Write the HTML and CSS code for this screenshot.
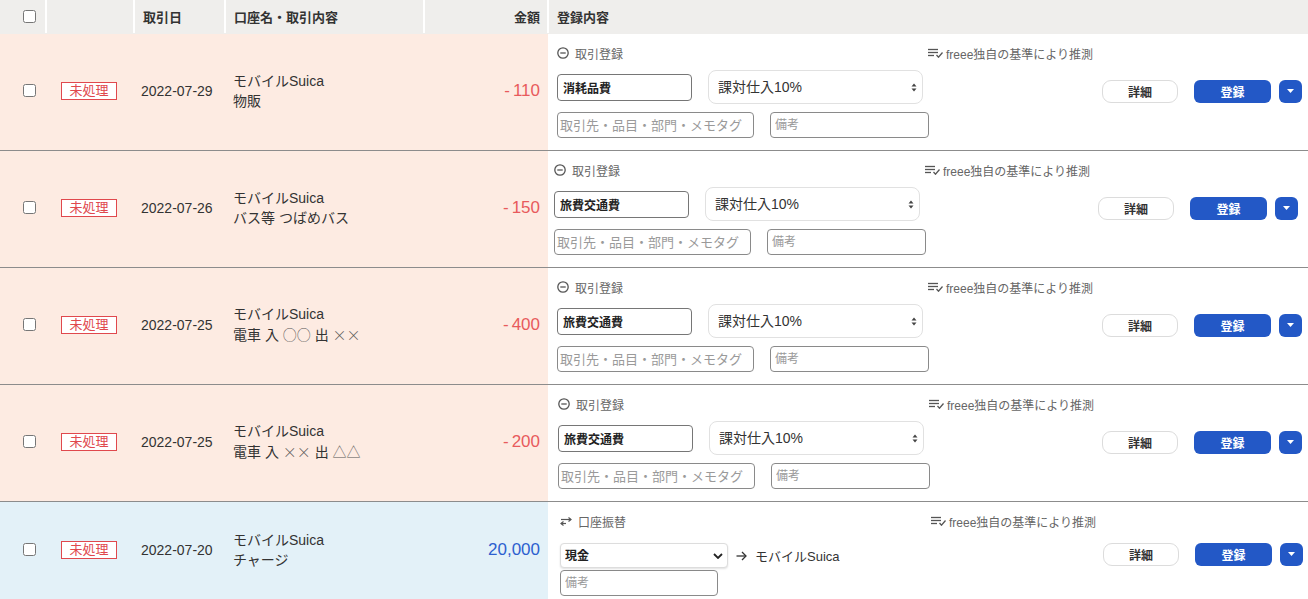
FILE: index.html
```html
<!DOCTYPE html>
<html lang="ja">
<head>
<meta charset="utf-8">
<title>取引一覧</title>
<link rel="stylesheet" href="styles.css">
</head>
<body>
<div class="table">
  <div class="thead">
    <div class="th th-check"><input type="checkbox" class="chk"></div>
    <div class="th"></div>
    <div class="th">取引日</div>
    <div class="th">口座名・取引内容</div>
    <div class="th th-amount">金額</div>
    <div class="th">登録内容</div>
  </div>

  <!-- row 1 -->
  <div class="row row-out">
    <div class="cell cell-check"><input type="checkbox" class="chk"></div>
    <div class="cell cell-status"><span class="badge">未処理</span></div>
    <div class="cell cell-date">2022-07-29</div>
    <div class="cell cell-desc"><div>モバイルSuica</div><div>物販</div></div>
    <div class="cell cell-amount"><span class="amt amt-out"><span class="minus">-</span>110</span></div>
    <div class="cell reg">
      <div class="reg-main">
        <div class="reg-head">
          <div class="reg-title">
            <svg class="ico-minus" width="12" height="12" viewBox="0 0 12 12"><circle cx="6" cy="6" r="5.2" fill="none" stroke="#555" stroke-width="1.3"/><line x1="3.3" y1="6" x2="8.7" y2="6" stroke="#555" stroke-width="1.3"/></svg>
            <span>取引登録</span>
          </div>
          <div class="reg-guess">
            <svg class="ico-guess" width="16" height="10" viewBox="0 0 16 10"><line x1="0" y1="1.5" x2="10" y2="1.5" stroke="#555" stroke-width="1.3"/><line x1="0" y1="4.5" x2="10" y2="4.5" stroke="#555" stroke-width="1.3"/><line x1="0" y1="7.5" x2="6" y2="7.5" stroke="#555" stroke-width="1.3"/><polyline points="8.5,7 10.5,9.2 14.5,4.5" fill="none" stroke="#555" stroke-width="1.3"/></svg>
            <span>freee独自の基準により推測</span>
          </div>
        </div>
        <div class="reg-line1">
          <input class="acct" type="text" value="消耗品費">
          <div class="tax">
            <select class="tax-select"><option>課対仕入10%</option></select>
            <svg class="tax-arrows" width="6" height="9" viewBox="0 0 6 9"><polygon points="0.5,3.5 3,0.5 5.5,3.5" fill="#444"/><polygon points="0.5,5.5 3,8.5 5.5,5.5" fill="#444"/></svg>
          </div>
        </div>
        <div class="reg-line2">
          <input class="field partner" type="text" placeholder="取引先・品目・部門・メモタグ">
          <input class="field memo" type="text" placeholder="備考">
        </div>
      </div>
      <div class="actions">
        <button class="btn-detail">詳細</button>
        <button class="btn-reg">登録</button>
        <button class="btn-dd"><svg width="7" height="4" viewBox="0 0 7 4"><polygon points="0,0 7,0 3.5,4" fill="#fff"/></svg></button>
      </div>
    </div>
  </div>

  <!-- row 2 -->
  <div class="row row-out">
    <div class="cell cell-check"><input type="checkbox" class="chk"></div>
    <div class="cell cell-status"><span class="badge">未処理</span></div>
    <div class="cell cell-date">2022-07-26</div>
    <div class="cell cell-desc"><div>モバイルSuica</div><div>バス等 つばめバス</div></div>
    <div class="cell cell-amount"><span class="amt amt-out"><span class="minus">-</span>150</span></div>
    <div class="cell reg reg-shift-l">
      <div class="reg-main">
        <div class="reg-head">
          <div class="reg-title">
            <svg class="ico-minus" width="12" height="12" viewBox="0 0 12 12"><circle cx="6" cy="6" r="5.2" fill="none" stroke="#555" stroke-width="1.3"/><line x1="3.3" y1="6" x2="8.7" y2="6" stroke="#555" stroke-width="1.3"/></svg>
            <span>取引登録</span>
          </div>
          <div class="reg-guess">
            <svg class="ico-guess" width="16" height="10" viewBox="0 0 16 10"><line x1="0" y1="1.5" x2="10" y2="1.5" stroke="#555" stroke-width="1.3"/><line x1="0" y1="4.5" x2="10" y2="4.5" stroke="#555" stroke-width="1.3"/><line x1="0" y1="7.5" x2="6" y2="7.5" stroke="#555" stroke-width="1.3"/><polyline points="8.5,7 10.5,9.2 14.5,4.5" fill="none" stroke="#555" stroke-width="1.3"/></svg>
            <span>freee独自の基準により推測</span>
          </div>
        </div>
        <div class="reg-line1">
          <input class="acct" type="text" value="旅費交通費">
          <div class="tax">
            <select class="tax-select"><option>課対仕入10%</option></select>
            <svg class="tax-arrows" width="6" height="9" viewBox="0 0 6 9"><polygon points="0.5,3.5 3,0.5 5.5,3.5" fill="#444"/><polygon points="0.5,5.5 3,8.5 5.5,5.5" fill="#444"/></svg>
          </div>
        </div>
        <div class="reg-line2">
          <input class="field partner" type="text" placeholder="取引先・品目・部門・メモタグ">
          <input class="field memo" type="text" placeholder="備考">
        </div>
      </div>
      <div class="actions">
        <button class="btn-detail">詳細</button>
        <button class="btn-reg">登録</button>
        <button class="btn-dd"><svg width="7" height="4" viewBox="0 0 7 4"><polygon points="0,0 7,0 3.5,4" fill="#fff"/></svg></button>
      </div>
    </div>
  </div>

  <!-- row 3 -->
  <div class="row row-out">
    <div class="cell cell-check"><input type="checkbox" class="chk"></div>
    <div class="cell cell-status"><span class="badge">未処理</span></div>
    <div class="cell cell-date">2022-07-25</div>
    <div class="cell cell-desc"><div>モバイルSuica</div><div>電車 入 <span class="sym">○○</span> 出 <span class="sym">××</span></div></div>
    <div class="cell cell-amount"><span class="amt amt-out"><span class="minus">-</span>400</span></div>
    <div class="cell reg">
      <div class="reg-main">
        <div class="reg-head">
          <div class="reg-title">
            <svg class="ico-minus" width="12" height="12" viewBox="0 0 12 12"><circle cx="6" cy="6" r="5.2" fill="none" stroke="#555" stroke-width="1.3"/><line x1="3.3" y1="6" x2="8.7" y2="6" stroke="#555" stroke-width="1.3"/></svg>
            <span>取引登録</span>
          </div>
          <div class="reg-guess">
            <svg class="ico-guess" width="16" height="10" viewBox="0 0 16 10"><line x1="0" y1="1.5" x2="10" y2="1.5" stroke="#555" stroke-width="1.3"/><line x1="0" y1="4.5" x2="10" y2="4.5" stroke="#555" stroke-width="1.3"/><line x1="0" y1="7.5" x2="6" y2="7.5" stroke="#555" stroke-width="1.3"/><polyline points="8.5,7 10.5,9.2 14.5,4.5" fill="none" stroke="#555" stroke-width="1.3"/></svg>
            <span>freee独自の基準により推測</span>
          </div>
        </div>
        <div class="reg-line1">
          <input class="acct" type="text" value="旅費交通費">
          <div class="tax">
            <select class="tax-select"><option>課対仕入10%</option></select>
            <svg class="tax-arrows" width="6" height="9" viewBox="0 0 6 9"><polygon points="0.5,3.5 3,0.5 5.5,3.5" fill="#444"/><polygon points="0.5,5.5 3,8.5 5.5,5.5" fill="#444"/></svg>
          </div>
        </div>
        <div class="reg-line2">
          <input class="field partner" type="text" placeholder="取引先・品目・部門・メモタグ">
          <input class="field memo" type="text" placeholder="備考">
        </div>
      </div>
      <div class="actions">
        <button class="btn-detail">詳細</button>
        <button class="btn-reg">登録</button>
        <button class="btn-dd"><svg width="7" height="4" viewBox="0 0 7 4"><polygon points="0,0 7,0 3.5,4" fill="#fff"/></svg></button>
      </div>
    </div>
  </div>

  <!-- row 4 -->
  <div class="row row-out">
    <div class="cell cell-check"><input type="checkbox" class="chk"></div>
    <div class="cell cell-status"><span class="badge">未処理</span></div>
    <div class="cell cell-date">2022-07-25</div>
    <div class="cell cell-desc"><div>モバイルSuica</div><div>電車 入 <span class="sym">××</span> 出 <span class="sym">△△</span></div></div>
    <div class="cell cell-amount"><span class="amt amt-out"><span class="minus">-</span>200</span></div>
    <div class="cell reg reg-shift-r">
      <div class="reg-main">
        <div class="reg-head">
          <div class="reg-title">
            <svg class="ico-minus" width="12" height="12" viewBox="0 0 12 12"><circle cx="6" cy="6" r="5.2" fill="none" stroke="#555" stroke-width="1.3"/><line x1="3.3" y1="6" x2="8.7" y2="6" stroke="#555" stroke-width="1.3"/></svg>
            <span>取引登録</span>
          </div>
          <div class="reg-guess">
            <svg class="ico-guess" width="16" height="10" viewBox="0 0 16 10"><line x1="0" y1="1.5" x2="10" y2="1.5" stroke="#555" stroke-width="1.3"/><line x1="0" y1="4.5" x2="10" y2="4.5" stroke="#555" stroke-width="1.3"/><line x1="0" y1="7.5" x2="6" y2="7.5" stroke="#555" stroke-width="1.3"/><polyline points="8.5,7 10.5,9.2 14.5,4.5" fill="none" stroke="#555" stroke-width="1.3"/></svg>
            <span>freee独自の基準により推測</span>
          </div>
        </div>
        <div class="reg-line1">
          <input class="acct" type="text" value="旅費交通費">
          <div class="tax">
            <select class="tax-select"><option>課対仕入10%</option></select>
            <svg class="tax-arrows" width="6" height="9" viewBox="0 0 6 9"><polygon points="0.5,3.5 3,0.5 5.5,3.5" fill="#444"/><polygon points="0.5,5.5 3,8.5 5.5,5.5" fill="#444"/></svg>
          </div>
        </div>
        <div class="reg-line2">
          <input class="field partner" type="text" placeholder="取引先・品目・部門・メモタグ">
          <input class="field memo" type="text" placeholder="備考">
        </div>
      </div>
      <div class="actions">
        <button class="btn-detail">詳細</button>
        <button class="btn-reg">登録</button>
        <button class="btn-dd"><svg width="7" height="4" viewBox="0 0 7 4"><polygon points="0,0 7,0 3.5,4" fill="#fff"/></svg></button>
      </div>
    </div>
  </div>

  <!-- row 5 -->
  <div class="row row-in">
    <div class="cell cell-check"><input type="checkbox" class="chk"></div>
    <div class="cell cell-status"><span class="badge">未処理</span></div>
    <div class="cell cell-date">2022-07-20</div>
    <div class="cell cell-desc"><div>モバイルSuica</div><div>チャージ</div></div>
    <div class="cell cell-amount"><span class="amt amt-in">20,000</span></div>
    <div class="cell reg reg-transfer">
      <div class="reg-main">
        <div class="reg-head">
          <div class="reg-title">
            <svg class="ico-transfer" width="12" height="9" viewBox="0 0 12 9"><line x1="1" y1="2.5" x2="11" y2="2.5" stroke="#555" stroke-width="1.2"/><polyline points="8.5,0.5 11,2.5 8.5,4.5" fill="none" stroke="#555" stroke-width="1.2"/><line x1="1" y1="6.5" x2="6" y2="6.5" stroke="#555" stroke-width="1.2"/><polyline points="3.5,4.5 1,6.5 3.5,8.5" fill="none" stroke="#555" stroke-width="1.2"/></svg>
            <span>口座振替</span>
          </div>
          <div class="reg-guess">
            <svg class="ico-guess" width="16" height="10" viewBox="0 0 16 10"><line x1="0" y1="1.5" x2="10" y2="1.5" stroke="#555" stroke-width="1.3"/><line x1="0" y1="4.5" x2="10" y2="4.5" stroke="#555" stroke-width="1.3"/><line x1="0" y1="7.5" x2="6" y2="7.5" stroke="#555" stroke-width="1.3"/><polyline points="8.5,7 10.5,9.2 14.5,4.5" fill="none" stroke="#555" stroke-width="1.3"/></svg>
            <span>freee独自の基準により推測</span>
          </div>
        </div>
        <div class="transfer-line">
          <div class="wallet">
            <select class="wallet-select"><option>現金</option></select>
            <svg class="wallet-chev" width="10" height="6" viewBox="0 0 10 6"><polyline points="1,1 5,5 9,1" fill="none" stroke="#222" stroke-width="1.8"/></svg>
          </div>
          <svg class="ico-arrow" width="11" height="10" viewBox="0 0 11 10"><line x1="0.5" y1="5" x2="10" y2="5" stroke="#333" stroke-width="1.3"/><polyline points="6,1 10,5 6,9" fill="none" stroke="#333" stroke-width="1.3"/></svg>
          <span class="transfer-to">モバイルSuica</span>
        </div>
        <input class="field memo memo-transfer" type="text" placeholder="備考">
      </div>
      <div class="actions">
        <button class="btn-detail">詳細</button>
        <button class="btn-reg">登録</button>
        <button class="btn-dd"><svg width="7" height="4" viewBox="0 0 7 4"><polygon points="0,0 7,0 3.5,4" fill="#fff"/></svg></button>
      </div>
    </div>
  </div>
</div>
</body>
</html>
```

FILE: styles.css
```css
html, body {
  margin: 0;
  padding: 0;
  overflow: hidden;
  background: #ffffff;
}

body {
  font-family: "Liberation Sans", "Noto Sans CJK JP", sans-serif;
  color: #333333;
  font-size: 14px;
}

.table {
  width: 1308px;
}

.thead,
.row {
  display: grid;
  grid-template-columns: 45px 88px 91px 199px 124px 1fr;
}

.thead {
  height: 34px;
  background: #efeeec;
}

.th {
  box-sizing: border-box;
  border-left: 2px solid #ffffff;
  display: flex;
  align-items: center;
  padding: 0 8px;
  font-size: 13px;
  font-weight: bold;
  color: #333333;
  height: 33px;
}

.th:first-child {
  border-left: none;
}

.th-check {
  padding-left: 23px;
}

.th-amount {
  justify-content: flex-end;
  padding-right: 7px;
}

.chk {
  margin: 0;
  width: 13px;
  height: 13px;
}

.row {
  border-bottom: 1px solid #8c8c8c;
}

.row-out {
  background: #fdebe2;
}

.row-in {
  background: #e3f1f8;
}

.cell {
  display: flex;
  align-items: center;
  box-sizing: border-box;
  padding-bottom: 3px;
}

.cell-check {
  padding-left: 23px;
}

.cell-status {
  justify-content: center;
}

.badge {
  box-sizing: border-box;
  width: 56px;
  height: 18px;
  border: 1px solid #e0484d;
  background: #ffffff;
  color: #e0484d;
  font-size: 13px;
  line-height: 16px;
  text-align: center;
}

.cell-date {
  padding-left: 8px;
  font-size: 14px;
  color: #333333;
}

.cell-desc {
  padding-left: 9px;
  flex-direction: column;
  align-items: flex-start;
  justify-content: center;
  font-size: 14px;
  line-height: 20px;
  color: #333333;
}

.sym {
  font-family: "Noto Sans CJK JP", sans-serif;
  font-weight: 300;
  color: #555555;
}

.cell-amount {
  justify-content: flex-end;
  padding-right: 7px;
}

.amt {
  font-size: 17px;
}

.minus {
  margin-right: 3px;
}

.amt-out {
  color: #e85a5c;
}

.amt-in {
  color: #2d5fcf;
}

/* registration cell */
.reg {
  background: #ffffff;
  padding: 10px 6px 12px 9px;
  display: flex;
  align-items: center;
  margin-left: 1px;
}

.reg-shift-l {
  padding-left: 6px;
  padding-right: 10px;
}

.reg-shift-r {
  padding-left: 10px;
}

.reg-transfer {
  padding-left: 12px;
  padding-right: 5px;
  padding-bottom: 4px;
}

.reg-main {
  display: flex;
  flex-direction: column;
}

.reg-head {
  display: flex;
  align-items: center;
  height: 18px;
  font-size: 12px;
  color: #666666;
}

.reg-title {
  flex: 0 0 371px;
  display: flex;
  align-items: center;
  gap: 6px;
}

.reg-guess {
  display: flex;
  align-items: center;
  gap: 2px;
}

.reg-line1 {
  display: flex;
  align-items: center;
  gap: 16px;
  margin-top: 8px;
  height: 34px;
}

.acct {
  box-sizing: border-box;
  width: 135px;
  height: 27px;
  border: 1px solid #767676;
  border-radius: 4px;
  padding: 0 5px;
  font-family: inherit;
  font-size: 12px;
  font-weight: bold;
  color: #222222;
  background: #ffffff;
  outline: none;
}

.tax {
  position: relative;
  width: 215px;
  height: 34px;
}

.tax-select {
  appearance: none;
  -webkit-appearance: none;
  box-sizing: border-box;
  width: 215px;
  height: 34px;
  border: 1px solid #e1e1e1;
  border-radius: 8px;
  background: #ffffff;
  padding: 0 9px;
  font-family: inherit;
  font-size: 14px;
  color: #333333;
}

.tax-arrows {
  position: absolute;
  right: 6px;
  top: 13px;
}

.reg-line2 {
  display: flex;
  gap: 16px;
  margin-top: 8px;
}

.field {
  box-sizing: border-box;
  height: 26px;
  border: 1px solid #8a8a8a;
  border-radius: 4px;
  background: #ffffff;
  padding: 0 2px;
  font-family: inherit;
  font-size: 13px;
  color: #333333;
  outline: none;
}

.field::placeholder {
  color: #9a9a9a;
}

.partner {
  width: 197px;
}

.memo {
  width: 159px;
  padding-left: 4px;
  font-size: 12px;
}

.transfer-line {
  display: flex;
  align-items: center;
  margin-top: 13px;
  height: 25px;
}

.wallet {
  position: relative;
  width: 168px;
  height: 25px;
}

.wallet-select {
  appearance: none;
  -webkit-appearance: none;
  box-sizing: border-box;
  width: 168px;
  height: 25px;
  border: 1px solid #dddddd;
  border-radius: 4px;
  background: #ffffff;
  box-shadow: 0 1px 2px rgba(0, 0, 0, 0.12);
  padding: 0 4px;
  font-family: inherit;
  font-size: 12px;
  font-weight: bold;
  color: #222222;
}

.wallet-chev {
  position: absolute;
  right: 5px;
  top: 10px;
}

.ico-arrow {
  margin-left: 8px;
  margin-right: 8px;
}

.transfer-to {
  font-size: 13px;
  color: #333333;
}

.memo-transfer {
  margin-top: 2px;
  width: 158px;
}

.actions {
  margin-left: auto;
  display: flex;
  align-items: center;
}

.actions button {
  font-family: inherit;
  font-size: 12px;
  font-weight: bold;
  height: 23px;
  box-sizing: border-box;
  padding: 0;
  cursor: pointer;
}

.btn-detail {
  width: 76px;
  border: 1px solid #dcdcdc;
  border-radius: 9px;
  background: #ffffff;
  color: #333333;
}

.btn-reg {
  width: 77px;
  margin-left: 16px;
  border: none;
  border-radius: 6px;
  background: #2358c6;
  color: #ffffff;
}

.btn-dd {
  width: 23px;
  margin-left: 8px;
  border: none;
  border-radius: 6px;
  background: #2358c6;
  display: flex;
  align-items: center;
  justify-content: center;
}
```
